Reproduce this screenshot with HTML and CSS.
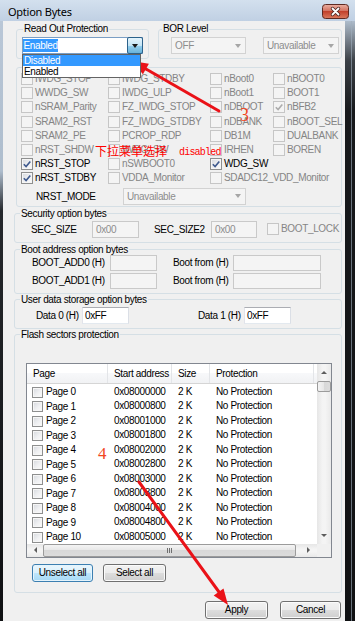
FILE: index.html
```html
<!DOCTYPE html>
<html>
<head>
<meta charset="utf-8">
<title>Option Bytes</title>
<link rel="stylesheet" href="styles.css">
</head>
<body>
<div class="window">
  <div class="titlebar">
    <span class="title">Option Bytes</span>
    <span class="close">
      <svg width="27" height="15" viewBox="0 0 27 15">
        <defs>
          <linearGradient id="cg" x1="0" y1="0" x2="0" y2="1">
            <stop offset="0" stop-color="#eab0a2"/>
            <stop offset="0.45" stop-color="#d47462"/>
            <stop offset="0.5" stop-color="#c2412c"/>
            <stop offset="1" stop-color="#db7a5e"/>
          </linearGradient>
        </defs>
        <rect x="0.5" y="0.5" width="26" height="14" rx="3" fill="url(#cg)" stroke="#5e2a22"/>
        <path d="M10.5 4.5 L16.5 10.5 M16.5 4.5 L10.5 10.5" stroke="#4a2520" stroke-width="3.4" stroke-linecap="round"/>
        <path d="M10.5 4.5 L16.5 10.5 M16.5 4.5 L10.5 10.5" stroke="#ffffff" stroke-width="1.8" stroke-linecap="round"/>
      </svg>
    </span>
  </div>
  <div class="frame-l"></div>
  <div class="client">
    <div class="row-a">
      <fieldset class="grp rop">
        <legend class="lg-rop">Read Out Protection</legend>
        <div class="rop-in">
          <div class="combo focus w-rop">
            <span class="ct"><span class="sel">Enabled</span></span>
            <span class="cbtn pressed"><i class="tri"></i></span>
            <div class="droplist">
              <div class="opt hl">Disabled</div>
              <div class="opt">Enabled</div>
            </div>
          </div>
        </div>
      </fieldset>
      <fieldset class="grp bor">
        <legend class="lg-bor">BOR Level</legend>
        <div class="bor-in">
          <div class="combo dis w-off"><span class="ct">OFF</span><span class="cbtn"><i class="tri"></i></span></div>
          <div class="combo dis w-unav"><span class="ct">Unavailable</span><span class="cbtn"><i class="tri"></i></span></div>
        </div>
      </fieldset>
    </div>

    <div class="flags">
      <div class="flag-grid">
        <label class="cb dis"><span class="box"></span>IWDG_STOP</label>
        <label class="cb dis"><span class="box"></span>IWDG_STDBY</label>
        <label class="cb dis"><span class="box"></span>nBoot0</label>
        <label class="cb dis"><span class="box"></span>nBOOT0</label>

        <label class="cb dis"><span class="box"></span>WWDG_SW</label>
        <label class="cb dis"><span class="box"></span>IWDG_ULP</label>
        <label class="cb dis"><span class="box"></span>nBoot1</label>
        <label class="cb dis"><span class="box"></span>BOOT1</label>

        <label class="cb dis"><span class="box"></span>nSRAM_Parity</label>
        <label class="cb dis"><span class="box"></span>FZ_IWDG_STOP</label>
        <label class="cb dis"><span class="box"></span>nDBOOT</label>
        <label class="cb dis"><span class="box"><svg viewBox="0 0 10 10"><path d="M1.8 5.2 L4.1 7.6 L8.3 2.4"/></svg></span>nBFB2</label>

        <label class="cb dis"><span class="box"></span>SRAM2_RST</label>
        <label class="cb dis"><span class="box"></span>FZ_IWDG_STDBY</label>
        <label class="cb dis"><span class="box"></span>nDBANK</label>
        <label class="cb dis"><span class="box"></span>nBOOT_SEL</label>

        <label class="cb dis"><span class="box"></span>SRAM2_PE</label>
        <label class="cb dis"><span class="box"></span>PCROP_RDP</label>
        <label class="cb dis"><span class="box"></span>DB1M</label>
        <label class="cb dis"><span class="box"></span>DUALBANK</label>

        <label class="cb dis"><span class="box"></span>nRST_SHDW</label>
        <label class="cb dis"><span class="box"></span>IWDG_SW</label>
        <label class="cb dis"><span class="box"></span>IRHEN</label>
        <label class="cb dis"><span class="box"></span>BOREN</label>

        <label class="cb"><span class="box"><svg viewBox="0 0 10 10"><path d="M1.8 5.2 L4.1 7.6 L8.3 2.4"/></svg></span>nRST_STOP</label>
        <label class="cb dis"><span class="box"></span>nSWBOOT0</label>
        <label class="cb"><span class="box"><svg viewBox="0 0 10 10"><path d="M1.8 5.2 L4.1 7.6 L8.3 2.4"/></svg></span>WDG_SW</label>
        <span></span>

        <label class="cb"><span class="box"><svg viewBox="0 0 10 10"><path d="M1.8 5.2 L4.1 7.6 L8.3 2.4"/></svg></span>nRST_STDBY</label>
        <label class="cb dis"><span class="box"></span>VDDA_Monitor</label>
        <label class="cb dis span2"><span class="box"></span>SDADC12_VDD_Monitor</label>
      </div>
      <div class="nrst-row">
        <span class="lbl-nrst">NRST_MODE</span>
        <div class="combo dis w-nrst"><span class="ct">Unavailable</span><span class="cbtn"><i class="tri"></i></span></div>
      </div>
    </div>

    <fieldset class="grp low sec">
      <legend class="lg-low">Security option bytes</legend>
      <div class="sec-row">
        <span class="lbl l-sec1">SEC_SIZE</span>
        <span class="tb dis w47">0x00</span>
        <span class="lbl l-sec2">SEC_SIZE2</span>
        <span class="tb dis w46">0x00</span>
        <label class="cb dis bootlock"><span class="box"></span>BOOT_LOCK</label>
      </div>
    </fieldset>

    <fieldset class="grp low boot">
      <legend class="lg-low">Boot address option bytes</legend>
      <div class="boot-in">
        <div class="boot-row">
          <span class="lbl l-add">BOOT_ADD0 (H)</span>
          <span class="tb dis w47"></span>
          <span class="lbl l-from">Boot from (H)</span>
          <span class="tb dis w88"></span>
        </div>
        <div class="boot-row">
          <span class="lbl l-add">BOOT_ADD1 (H)</span>
          <span class="tb dis w47"></span>
          <span class="lbl l-from">Boot from (H)</span>
          <span class="tb dis w88"></span>
        </div>
      </div>
    </fieldset>

    <fieldset class="grp low udata">
      <legend class="lg-low">User data storage option bytes</legend>
      <div class="ud-row">
        <span class="lbl l-d0">Data 0 (H)</span>
        <span class="tb w47">0xFF</span>
        <span class="lbl l-d1">Data 1 (H)</span>
        <span class="tb w47">0xFF</span>
      </div>
    </fieldset>

    <fieldset class="grp low flash">
      <legend class="lg-low">Flash sectors protection</legend>
      <div class="flash-in">
        <div class="list">
          <div class="lv">
            <div class="lv-head">
              <span class="c1">Page</span><span class="c2">Start address</span><span class="c3">Size</span><span class="c4">Protection</span>
            </div>
            <div class="lv-body">
              <div class="lv-row"><span class="c1"><span class="box sm"></span>Page 0</span><span class="c2">0x08000000</span><span class="c3">2 K</span><span class="c4">No Protection</span></div>
              <div class="lv-row"><span class="c1"><span class="box sm"></span>Page 1</span><span class="c2">0x08000800</span><span class="c3">2 K</span><span class="c4">No Protection</span></div>
              <div class="lv-row"><span class="c1"><span class="box sm"></span>Page 2</span><span class="c2">0x08001000</span><span class="c3">2 K</span><span class="c4">No Protection</span></div>
              <div class="lv-row"><span class="c1"><span class="box sm"></span>Page 3</span><span class="c2">0x08001800</span><span class="c3">2 K</span><span class="c4">No Protection</span></div>
              <div class="lv-row"><span class="c1"><span class="box sm"></span>Page 4</span><span class="c2">0x08002000</span><span class="c3">2 K</span><span class="c4">No Protection</span></div>
              <div class="lv-row"><span class="c1"><span class="box sm"></span>Page 5</span><span class="c2">0x08002800</span><span class="c3">2 K</span><span class="c4">No Protection</span></div>
              <div class="lv-row"><span class="c1"><span class="box sm"></span>Page 6</span><span class="c2">0x08003000</span><span class="c3">2 K</span><span class="c4">No Protection</span></div>
              <div class="lv-row"><span class="c1"><span class="box sm"></span>Page 7</span><span class="c2">0x08003800</span><span class="c3">2 K</span><span class="c4">No Protection</span></div>
              <div class="lv-row"><span class="c1"><span class="box sm"></span>Page 8</span><span class="c2">0x08004000</span><span class="c3">2 K</span><span class="c4">No Protection</span></div>
              <div class="lv-row"><span class="c1"><span class="box sm"></span>Page 9</span><span class="c2">0x08004800</span><span class="c3">2 K</span><span class="c4">No Protection</span></div>
              <div class="lv-row"><span class="c1"><span class="box sm"></span>Page 10</span><span class="c2">0x08005000</span><span class="c3">2 K</span><span class="c4">No Protection</span></div>
            </div>
          </div>
          <div class="vscroll">
            <span class="sb-btn v"><i class="ar up"></i></span>
            <span class="sb-thumb v"></span>
            <span class="sb-track"></span>
            <span class="sb-btn v"><i class="ar dn"></i></span>
          </div>
          <div class="hscroll">
            <span class="sb-btn hl"><i class="ar lt"></i></span>
            <span class="sb-thumb h"><i class="grip"></i></span>
            <span class="sb-track"></span>
            <span class="sb-btn hr"><i class="ar rt"></i></span>
          </div>
          <div class="corner"></div>
        </div>
        <div class="sel-btns">
          <span class="btn focus b-unsel">Unselect all</span>
          <span class="btn b-sel">Select all</span>
        </div>
      </div>
    </fieldset>

    <div class="dlg-btns">
      <span class="btn b-apply">Apply</span>
      <span class="btn b-cancel">Cancel</span>
    </div>
  </div>
  <div class="frame-r"></div>

  <svg class="annot" width="355" height="621" viewBox="0 0 355 621">
    <line x1="219" y1="111" x2="146" y2="69" stroke="#ea1218" stroke-width="3" stroke-linecap="round"/>
    <polygon points="132,61 148.9,63.8 142.9,74.2" fill="#ea1218"/>
    <line x1="139" y1="482" x2="219" y2="592" stroke="#ea1218" stroke-width="3" stroke-linecap="round"/>
    <polygon points="228,605 213.7,595.5 223.5,588.5" fill="#ea1218"/>
    <text x="240" y="121" class="num">3</text>
    <text x="98" y="459" class="num n4">4</text>
    <text x="95" y="156" class="cn">下拉菜单选择</text>
    <text x="179" y="155" class="en">disabled</text>
  </svg>
</div>
</body>
</html>
```

FILE: styles.css
```css
* { box-sizing: border-box; }
html, body { margin: 0; padding: 0; }
body {
  background: #15171a;
  font-family: "Liberation Sans", Arial, sans-serif;
  font-size: 10px;
  letter-spacing: -0.35px;
  color: #000;
}

.window {
  position: relative;
  width: 355px;
  height: 621px;
  display: grid;
  grid-template-columns: 3px 342px 10px;
  grid-template-rows: 21px 600px;
  overflow: hidden;
}

/* title bar */
.titlebar {
  grid-column: 1 / 4;
  display: flex;
  align-items: flex-start;
  background: linear-gradient(#d3e0ee, #c0d0e3);
  padding-left: 8px;
}
.title {
  font-family: "Noto Sans", "Liberation Sans", sans-serif;
  font-size: 11px;
  letter-spacing: -0.25px;
  line-height: 14px;
  margin-top: 5px;
  color: #000;
}
.close { margin-left: auto; margin-right: 6px; margin-top: 4px; width: 27px; height: 15px; }
.close svg { display: block; }

.frame-l { background: linear-gradient(#b9c7d7 0, #aebdcd 150px, #25282c 190px, #0f1012 100%); }
.frame-r {
  background:
    linear-gradient(to right, transparent 6px, rgba(160,175,190,.6) 6px, rgba(160,175,190,.6) 7px, transparent 7px),
    linear-gradient(#aebccb 0, #3a3f45 40px, #17191c 90px, #101113 100%);
}

.client {
  background: #f0f0f0;
  padding: 3px 3px 0 0;
  display: flex;
  flex-direction: column;
}

/* group boxes */
.grp {
  margin: 0;
  padding: 0;
  min-width: 0;
  border: 1px solid #d5dfe5;
  border-radius: 3px;
}
.grp legend {
  padding: 0 1px;
  line-height: 10px;
  font-size: 10px;
}
.lg-rop { margin-left: 6px; }
.lg-bor { margin-left: 3px; }
.lg-low { margin-left: 5px; }

.row-a { display: flex; padding-left: 13px; gap: 9px; }
.rop { width: 133px; }
.bor { width: 184px; }
.rop-in { padding: 3px 0 4px 5px; }
.bor-in { display: flex; gap: 17px; padding: 3px 0 4px 12px; }

/* combo boxes */
.combo {
  position: relative;
  display: flex;
  height: 17px;
  border: 1px solid #aab2bb;
  background: #fff;
}
.combo .ct { flex: 1; display: flex; align-items: center; padding-left: 3px; white-space: nowrap; overflow: hidden; }
.combo .cbtn { width: 15px; display: flex; align-items: center; justify-content: center; }
.tri { width: 0; height: 0; border-left: 3.5px solid transparent; border-right: 3.5px solid transparent; border-top: 4px solid #1a1a1a; }
.combo.focus { border-color: #7a9ec4; }
.combo.focus .ct { padding-left: 0; }
.sel { background: #3399ff; color: #fff; line-height: 13px; padding: 0 0.5px; }
.cbtn.pressed {
  margin: -1px -1px -1px 0;
  width: 16px;
  border: 1px solid #2c628b;
  border-radius: 2px;
  background: linear-gradient(#e5f4fc 0, #c4e5f6 50%, #98d1ef 50%, #68b3db 100%);
}
.combo.dis { border-color: #d2d2d2; background: #f4f4f4; color: #8d8d8d; }
.combo.dis .cbtn { background: #f4f4f4; }
.combo.dis .tri { border-top-color: #a6a6a6; }
.w-rop { width: 121px; }
.w-off { width: 75px; }
.w-unav { width: 76px; }
.w-nrst { width: 123px; }

.droplist {
  position: absolute;
  left: -1px;
  top: 16px;
  width: 119px;
  height: 24px;
  border: 1px solid #646464;
  background: #fff;
  z-index: 5;
}
.opt { height: 11px; line-height: 11px; padding-left: 1px; color: #000; }
.opt.hl { background: #3399ff; color: #fff; }

/* flags group */
.flags {
  margin: 8px 0 0 13px;
  width: 326px;
  border: 1px solid #d5dfe5;
  border-radius: 3px;
  padding: 4px 0 1px 4px;
}
.flag-grid {
  display: grid;
  grid-template-columns: 87px 102px 63px 1fr;
  grid-auto-rows: 14.2px;
}
.cb { display: flex; align-items: center; gap: 2px; white-space: nowrap; line-height: 12px; color: #000; }
.cb.dis { color: #858585; }
.span2 { grid-column: span 2; }
.box {
  flex: none;
  width: 12px;
  height: 12px;
  border: 1px solid #8e8f8f;
  background: linear-gradient(135deg, #d5d8dd 0, #eff0f2 55%, #fbfbfb 100%);
  box-shadow: inset 0 0 0 1px #f6f6f6;
}
.cb.dis .box { border-color: #c6c6c6; background: #f4f4f4; box-shadow: none; }
.box svg { display: block; width: 10px; height: 10px; }
.box path { fill: none; stroke: #3f5a8e; stroke-width: 1.6; }
.cb.dis .box path { stroke: #acacac; }

.nrst-row { display: flex; align-items: center; height: 17px; margin-top: 2.4px; }
.lbl-nrst { width: 102px; padding-left: 15px; }

/* lower groups */
.low { margin-left: 11px; width: 328px; }
.sec { margin-top: 2px; }
.boot, .udata, .flash { margin-top: 1px; }
.boot { margin-top: 2px; }

.lbl { white-space: nowrap; flex: none; }
.tb {
  flex: none;
  display: block;
  height: 17px;
  line-height: 15px;
  border: 1px solid #abadb3;
  border-left-color: #e2e3ea;
  border-right-color: #dbdfe6;
  border-bottom-color: #e3e9ef;
  background: #fff;
  padding-left: 2px;
  white-space: nowrap;
}
.tb.dis { background: #f4f4f4; border-color: #c9c9c9; color: #8d8d8d; padding-left: 3px; }
.w46 { width: 46px; }
.w47 { width: 47px; }
.w88 { width: 88px; }

.sec-row { display: flex; align-items: center; height: 17px; margin: 2px 0 4px; }
.l-sec1 { margin-left: 16px; width: 61px; }
.l-sec2 { margin-left: 15px; width: 57px; }
.bootlock { margin-left: 10px; }

.boot-in { padding: 0 0 4px; display: flex; flex-direction: column; gap: 2px; }
.boot-row { display: flex; align-items: center; height: 16px; }
.boot-row .tb { height: 16px; }
.l-add { margin-left: 17px; width: 78px; }
.l-from { margin-left: 16px; width: 60px; }

.ud-row { display: flex; align-items: center; height: 17px; margin: 2px 0 4px; }
.l-d0 { margin-left: 21px; width: 46px; }
.l-d1 { margin-left: 69px; width: 46px; }

/* flash list */
.flash-in { padding: 23px 0 10px 11px; }
.list {
  width: 306px;
  height: 195px;
  border: 1px solid #828790;
  background: #fff;
  display: grid;
  grid-template-columns: 290px 14px;
  grid-template-rows: 180px 13px;
}
.lv { overflow: hidden; }
.lv-head {
  display: flex;
  height: 20px;
  border-bottom: 1px solid #d5d5d5;
  background: linear-gradient(#ffffff 0, #ffffff 50%, #f7f8fa 50%, #f1f2f4 100%);
}
.lv-head span { line-height: 19px; border-right: 1px solid #e3e5e8; }
.c1, .c2, .c3, .c4 { flex: none; padding-left: 6px; white-space: nowrap; }
.c1 { width: 81px; }
.c2 { width: 64px; }
.c3 { width: 38px; }
.c4 { width: 104px; }
.lv-body { padding-top: 1px; }
.lv-row { display: flex; height: 14.5px; line-height: 14px; }
.lv-row .c1 { display: flex; align-items: center; gap: 3px; padding-left: 5px; }
.box.sm { width: 11px; height: 11px; }

.vscroll { display: flex; flex-direction: column; background: linear-gradient(to right, #e6e6e6, #f4f4f4 40%, #f4f4f4 60%, #e9e9e9); }
.hscroll { display: flex; background: linear-gradient(#e6e6e6, #f4f4f4 40%, #f4f4f4 60%, #e9e9e9); }
.corner { background: #f0f0f0; }
.sb-btn { flex: none; display: flex; align-items: center; justify-content: center; }
.sb-btn.v { height: 17px; }
.sb-btn.hl { width: 16px; }
.sb-btn.hr { width: 17px; }
.sb-track { flex: 1; }
.sb-thumb {
  flex: none;
  border: 1px solid #9b9b9b;
  border-radius: 2px;
}
.sb-thumb.v { height: 11px; background: linear-gradient(to right, #f4f4f4, #e6e6e6 50%, #d8d8d8 50%, #dcdcdc); }
.sb-thumb.h {
  width: 253px;
  background: linear-gradient(#f4f4f4, #e6e6e6 50%, #d8d8d8 50%, #dcdcdc);
  display: flex; align-items: center; justify-content: center;
}
.grip { display: block; width: 5px; height: 5px; background: repeating-linear-gradient(to right, #6f6f6f 0 1px, transparent 1px 2px); }
.ar { display: block; width: 0; height: 0; }
.ar.up { border-left: 3px solid transparent; border-right: 3px solid transparent; border-bottom: 3px solid #5d5d5d; }
.ar.dn { border-left: 3px solid transparent; border-right: 3px solid transparent; border-top: 3px solid #5d5d5d; }
.ar.lt { border-top: 3px solid transparent; border-bottom: 3px solid transparent; border-right: 3px solid #5d5d5d; }
.ar.rt { border-top: 3px solid transparent; border-bottom: 3px solid transparent; border-left: 3px solid #5d5d5d; }

/* buttons */
.btn {
  display: block;
  flex: none;
  height: 18px;
  line-height: 16px;
  text-align: center;
  border: 1px solid #707070;
  border-radius: 3px;
  background: linear-gradient(#f2f2f2 0, #ebebeb 50%, #dddddd 50%, #cfcfcf 100%);
  box-shadow: inset 0 0 0 1px #fbfbfb;
  color: #000;
}
.btn.focus {
  border-color: #3c7fb1;
  background: linear-gradient(#eaf6fd 0, #d9f0fc 50%, #bee6fd 50%, #a7d9f5 100%);
  box-shadow: inset 0 0 0 1px #e5f4fc;
}
.sel-btns { display: flex; margin-top: 6px; padding-left: 6px; }
.b-unsel { width: 61px; }
.b-sel { width: 63px; margin-left: 10px; }

.dlg-btns { display: flex; justify-content: flex-end; gap: 12px; margin-top: 8px; padding-right: 1px; }
.b-apply { width: 63px; }
.b-cancel { width: 61px; }

/* annotations */
.annot { position: absolute; left: 0; top: 0; pointer-events: none; letter-spacing: 0; }
.annot .num { font-family: "Liberation Serif", "Times New Roman", serif; font-size: 18px; fill: #f2461f; }
.annot .n4 { font-size: 17px; }
.annot .cn { font-family: "Noto Sans CJK SC", "Noto Sans", sans-serif; font-size: 12px; fill: #ff0000; }
.annot .en { font-family: "Liberation Mono", monospace; font-size: 10px; letter-spacing: -0.8px; fill: #ff0000; }
```
